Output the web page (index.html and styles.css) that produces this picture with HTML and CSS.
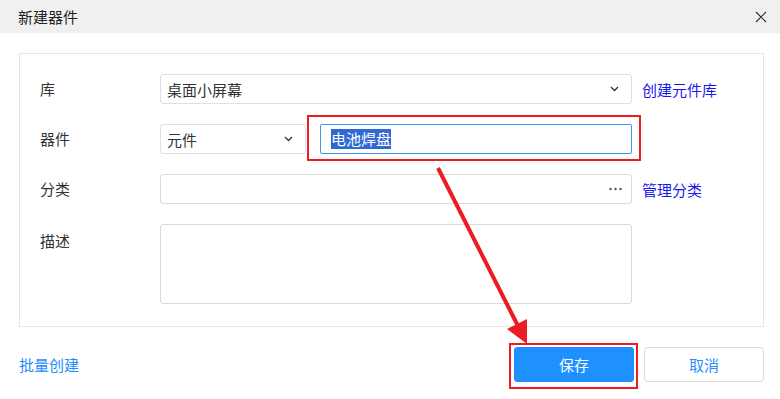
FILE: index.html
```html
<!DOCTYPE html>
<html lang="zh-CN">

<head>
    <meta charset="UTF-8">
    <title>新建器件</title>
    <link rel="stylesheet" href="styles.css">
</head>

<body>
    <div class="dialog">
        <div class="dlg-head">
            <span class="dlg-title">新建器件</span>
            <svg class="close" width="12" height="12" viewBox="0 0 12 12">
                <path d="M1 1L11 11M11 1L1 11" stroke="#333" stroke-width="1.2" fill="none" />
            </svg>
        </div>

        <div class="form-panel">
            <div class="form-row">
                <div class="form-label">库</div>
                <div class="control select wide">
                    <span>桌面小屏幕</span>
                    <svg class="chev" width="9" height="6" viewBox="0 0 9 6">
                        <path d="M1 1L4.5 4.5L8 1" stroke="#333" stroke-width="1.3" fill="none" />
                    </svg>
                </div>
                <a class="link" href="#">创建元件库</a>
            </div>

            <div class="form-row">
                <div class="form-label">器件</div>
                <div class="control select small">
                    <span>元件</span>
                    <svg class="chev" width="9" height="6" viewBox="0 0 9 6">
                        <path d="M1 1L4.5 4.5L8 1" stroke="#333" stroke-width="1.3" fill="none" />
                    </svg>
                </div>
                <div class="control name-input"><span class="picked">电池焊盘</span></div>
            </div>

            <div class="form-row">
                <div class="form-label">分类</div>
                <div class="control select wide plain">
                    <span></span>
                    <svg class="dots" width="13" height="4" viewBox="0 0 13 4">
                        <circle cx="1.5" cy="2" r="1.2" fill="#555" />
                        <circle cx="6.5" cy="2" r="1.2" fill="#555" />
                        <circle cx="11.5" cy="2" r="1.2" fill="#555" />
                    </svg>
                </div>
                <a class="link" href="#">管理分类</a>
            </div>

            <div class="form-row top">
                <div class="form-label">描述</div>
                <div class="control area wide"></div>
            </div>
        </div>

        <div class="dlg-foot">
            <a class="batch" href="#">批量创建</a>
            <div class="btns">
                <button class="btn primary">保存</button>
                <button class="btn">取消</button>
            </div>
        </div>

        <!-- 标注：红框 + 箭头 -->
        <svg class="marks" width="780" height="399" viewBox="0 0 780 399">
            <rect x="308" y="116" width="332" height="44" fill="none" stroke="#ec1c24" stroke-width="2" />
            <rect x="510" y="344" width="127" height="44" fill="none" stroke="#ec1c24" stroke-width="2" />
            <line x1="438" y1="168" x2="519" y2="328" stroke="#ec1c24" stroke-width="4" />
            <polygon points="527,344 507,329 527,319" fill="#ec1c24" />
        </svg>
    </div>
</body>

</html>
```

FILE: styles.css
```css
body {
    margin: 0;
    font-family: "Noto Sans CJK SC", "Microsoft YaHei", sans-serif;
    font-size: 15px;
    color: #333;
    background-color: #fff;
}

.dialog {
    position: relative;
    width: 780px;
    height: 399px;
    overflow: hidden;
}

.dlg-head {
    height: 33px;
    background-color: #f0f0f0;
    display: flex;
    align-items: center;
    justify-content: space-between;
    padding: 0 13px 0 18px;
}

.dlg-title {
    font-size: 15px;
    color: #222;
}

.form-panel {
    margin: 20px 16px 0 19px;
    border: 1px solid #e6e6e6;
    padding: 20px 20px 22px;
    display: flex;
    flex-direction: column;
    gap: 20px;
}

.form-row {
    display: flex;
    align-items: center;
    height: 30px;
}

.form-row.top {
    align-items: flex-start;
    height: 80px;
}

.form-label {
    width: 120px;
    line-height: 30px;
}

.form-row.top .form-label {
    line-height: 34px;
}

.control {
    box-sizing: border-box;
    height: 30px;
    border: 1px solid #dcdfe6;
    border-radius: 3px;
    display: flex;
    align-items: center;
    justify-content: space-between;
    padding: 0 12px 0 6px;
}

.control.wide {
    width: 472px;
}

.control.small {
    width: 146px;
}

.control.plain {
    border-color: #d9d9d9;
}

.control.area {
    height: 80px;
    border-color: #d9d9d9;
}

.name-input {
    margin-left: 14px;
    width: 312px;
    border-color: #3a96f0;
    border-radius: 2px;
    padding-left: 10px;
}

.picked {
    background-color: #3169d4;
    color: #fff;
    line-height: 20px;
}

.dots {
    margin-right: -3px;
}

.link {
    margin-left: 10px;
    color: #1818ee;
    text-decoration: none;
}

.dlg-foot {
    margin: 20px 16px 0 19px;
    display: flex;
    align-items: center;
    justify-content: space-between;
}

.batch {
    color: #1e8cff;
    text-decoration: none;
}

.btns {
    display: flex;
    gap: 10px;
}

.btn {
    width: 120px;
    height: 35px;
    border: 1px solid #dcdcdc;
    border-radius: 3px;
    background-color: #fff;
    color: #2a8cff;
    font-family: inherit;
    font-size: 15px;
}

.btn.primary {
    background-color: #1e90ff;
    border-color: #1e90ff;
    color: #fff;
}

.marks {
    position: absolute;
    left: 0;
    top: 0;
    pointer-events: none;
}
```
